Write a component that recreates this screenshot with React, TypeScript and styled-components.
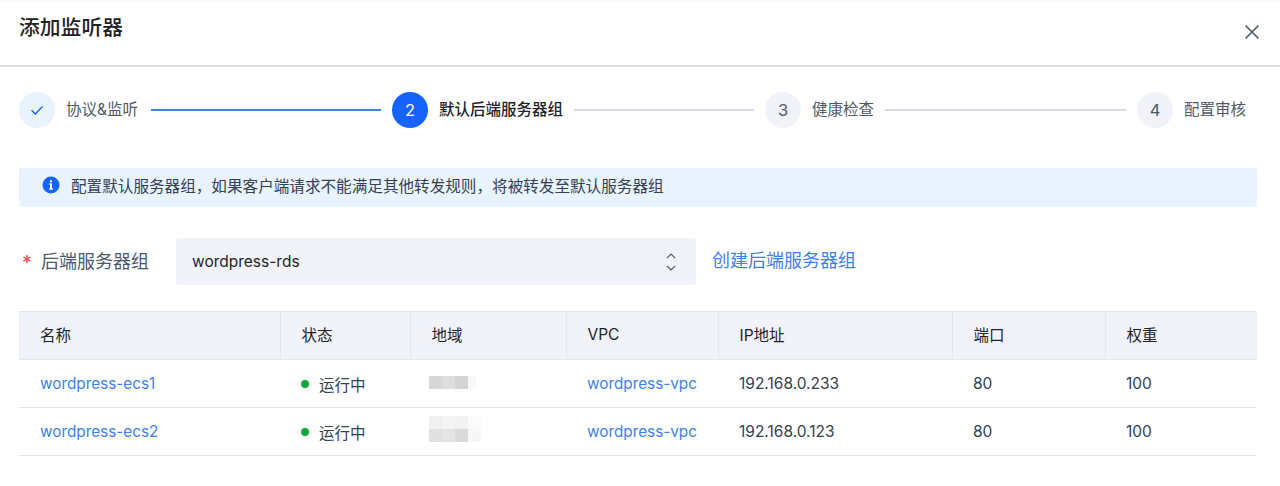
import React from 'react';
import styled, { createGlobalStyle } from 'styled-components';

const Global = createGlobalStyle`
  html, body { margin: 0; padding: 0; background: #fff; }
  body { font-family: Inter, "Noto Sans CJK SC", sans-serif; color: #1f2530; }
  * { box-sizing: border-box; }
`;
const Page = styled.div`width: 1280px; height: 486px; overflow: hidden; background: #fff;`;
const Header = styled.header`
  height: 67px; padding: 0 19px 8px 19px; display: flex; align-items: center; justify-content: space-between;
  border-top: 3px solid #fafafa; border-bottom: 2px solid #dcdee2;
`;
const Title = styled.h1`margin: 0; padding-bottom: 4px; font-size: 20.8px; font-weight: 500; line-height: 28px; color: #1f2329;`;
const Close = styled.button`border: 0; background: none; padding: 0; margin-top: 3px; width: 18px; height: 18px; display: flex; color: #4e5969;`;
const Body = styled.main`padding: 25px 23px 0 19px;`;
const Steps = styled.div`display: flex; align-items: center; height: 36px;`;
const Circle = styled.div<{ $state: string }>`
  width: 36px; height: 36px; border-radius: 50%; flex: none; display: flex; align-items: center; justify-content: center;
  font-size: 16.5px; font-weight: 400;
  background: ${p => p.$state === 'active' ? '#1664ff' : p.$state === 'done' ? '#e8f3ff' : '#f1f3f8'};
  color: ${p => p.$state === 'active' ? '#fff' : p.$state === 'done' ? '#1664ff' : '#4e5969'};
`;
const StepLabel = styled.span<{ $active?: boolean; $minW?: number }>`
  margin-left: 11px; font-size: 15.5px; line-height: 20px; white-space: nowrap;
  min-width: ${p => p.$minW ?? 0}px;
  color: ${p => p.$active ? '#1f2329' : '#4e5969'}; font-weight: ${p => p.$active ? 500 : 400};
`;
const Connector = styled.div<{ $w: number; $done?: boolean }>`
  width: ${p => p.$w}px; height: 2px; margin: 0 11px; flex: none; background: ${p => p.$done ? '#3f7ff0' : '#d6d9df'};
`;
const Notice = styled.div`
  margin-top: 40px; width: 1238px; height: 39px; padding: 0 0 5px 23px; display: flex; align-items: center; gap: 11px;
  border-radius: 2px; background: #e8f3ff; font-size: 15.6px; color: #36404f; white-space: nowrap;
`;
const FormRow = styled.div`margin-top: 31px; display: flex; align-items: center; height: 47px;`;
const Star = styled.span`color: #e5484d; font-size: 20px; width: 22px; padding: 3px 0 0 3px;`;
const FormLabel = styled.label`font-size: 18px; color: #4e5969; width: 135px; padding-bottom: 4px;`;
const Select = styled.div`
  width: 520px; height: 47px; padding: 0 20px 0 16px; display: flex; align-items: center; justify-content: space-between;
  border-radius: 3px; background: #f1f3f8; font-size: 15.5px; color: #1f2329;
`;
const Link = styled.a`margin-left: 16px; padding-bottom: 6px; font-size: 18px; color: #3f7ff0;`;
const Table = styled.table`
  margin-top: 26px; width: 1238px; border-collapse: collapse; table-layout: fixed; font-size: 15.5px;
`;
const Th = styled.th<{ $w: number }>`
  width: ${p => p.$w}px; height: 48px; padding: 0 21px 3px; background: #f1f3f8; text-align: left; font-weight: 400; color: #1f2329;
  border-top: 1px solid #e4e6eb; border-bottom: 1px solid #e4e6eb; border-left: 1px solid #e4e6eb;
  &:first-child { border-left: 0; }
`;
const Td = styled.td`height: 48px; padding: 0 21px 1px; border-bottom: 1px solid #e2e5ec; color: #36404f; white-space: nowrap;`;
const RowLink = styled.a`color: #3f7ff0; font-size: 15.3px;`;
const Status = styled.span`display: inline-flex; align-items: center; gap: 10px; vertical-align: -1px;`;
const Dot = styled.i`width: 8px; height: 8px; border-radius: 50%; background: #0fa83c;`;

const Check = () => (
  <svg width="16" height="16" viewBox="0 0 16 16" fill="none" stroke="currentColor" strokeWidth="1.3"><path d="M2.5 8.2 6.3 12 13.5 4.5" /></svg>
);
const X = () => (
  <svg width="18" height="18" viewBox="0 0 18 18" fill="none" stroke="currentColor" strokeWidth="1.6"><path d="M2.5 2.5l13 13M15.5 2.5l-13 13" /></svg>
);
const Info = () => (
  <svg width="18" height="18" viewBox="0 0 18 18"><circle cx="9" cy="9" r="8.5" fill="#1664ff" /><rect x="8" y="7.5" width="2" height="6" fill="#fff" /><rect x="8" y="4.3" width="2" height="2" fill="#fff" /><rect x="7" y="7.5" width="2" height="1" fill="#fff" /><rect x="7" y="12.5" width="4" height="1" fill="#fff" /></svg>
);
const Updown = () => (
  <svg width="10" height="20" viewBox="0 0 10 20" fill="none" stroke="#4e5969" strokeWidth="1.1"><path d="M1 6l4-4 4 4M1 14l4 4 4-4" /></svg>
);
const Mosaic = ({ cells, w }: { cells: string[][]; w: number }) => (
  <svg width={w} height={cells.length * 13} viewBox={`0 0 ${w} ${cells.length * 13}`} style={{ display: 'block' }}>
    {cells.map((r, y) => r.map((c, x) => <rect key={`${x}-${y}`} x={x * 13} y={y * 13} width="13" height="13" fill={c} />))}
  </svg>
);
const Blur = styled.div<{ $lift: number }>`margin-left: -2px; padding-bottom: ${p => p.$lift}px;`;

const rows = [
  { n: 'wordpress-ecs1', ip: '192.168.0.233', w: 47, lift: 1, m: [['#d6d6d6', '#dedede', '#d4d4d4', '#f8f8f8']] },
  { n: 'wordpress-ecs2', ip: '192.168.0.123', w: 52, lift: 5, m: [['#f0f0f0', '#f4f4f4', '#f2f2f2', '#fbfbfb'], ['#e0e0e0', '#e4e4e4', '#dadada', '#f7f7f7']] },
];
const cols = [261, 130, 156, 152, 234, 153, 152];

export default function App() {
  return (
    <Page>
      <Global />
      <Header>
        <Title>添加监听器</Title>
        <Close aria-label="关闭"><X /></Close>
      </Header>
      <Body>
        <Steps>
          <Circle $state="done"><Check /></Circle><StepLabel $minW={74}>协议&amp;监听</StepLabel><Connector $w={230} $done />
          <Circle $state="active">2</Circle><StepLabel $active>默认后端服务器组</StepLabel><Connector $w={180} />
          <Circle $state="todo">3</Circle><StepLabel>健康检查</StepLabel><Connector $w={241} />
          <Circle $state="todo">4</Circle><StepLabel>配置审核</StepLabel>
        </Steps>
        <Notice><Info />配置默认服务器组，如果客户端请求不能满足其他转发规则，将被转发至默认服务器组</Notice>
        <FormRow>
          <Star>*</Star><FormLabel>后端服务器组</FormLabel>
          <Select>wordpress-rds<Updown /></Select>
          <Link>创建后端服务器组</Link>
        </FormRow>
        <Table>
          <thead><tr>
            {['名称', '状态', '地域', 'VPC', 'IP地址', '端口', '权重'].map((h, i) => <Th key={h} $w={cols[i]}>{h}</Th>)}
          </tr></thead>
          <tbody>
            {rows.map(r => (
              <tr key={r.n}>
                <Td><RowLink>{r.n}</RowLink></Td>
                <Td><Status><Dot />运行中</Status></Td>
                <Td><Blur $lift={r.lift}><Mosaic cells={r.m} w={r.w} /></Blur></Td>
                <Td><RowLink>wordpress-vpc</RowLink></Td>
                <Td>{r.ip}</Td>
                <Td>80</Td>
                <Td>100</Td>
              </tr>
            ))}
          </tbody>
        </Table>
      </Body>
    </Page>
  );
}
